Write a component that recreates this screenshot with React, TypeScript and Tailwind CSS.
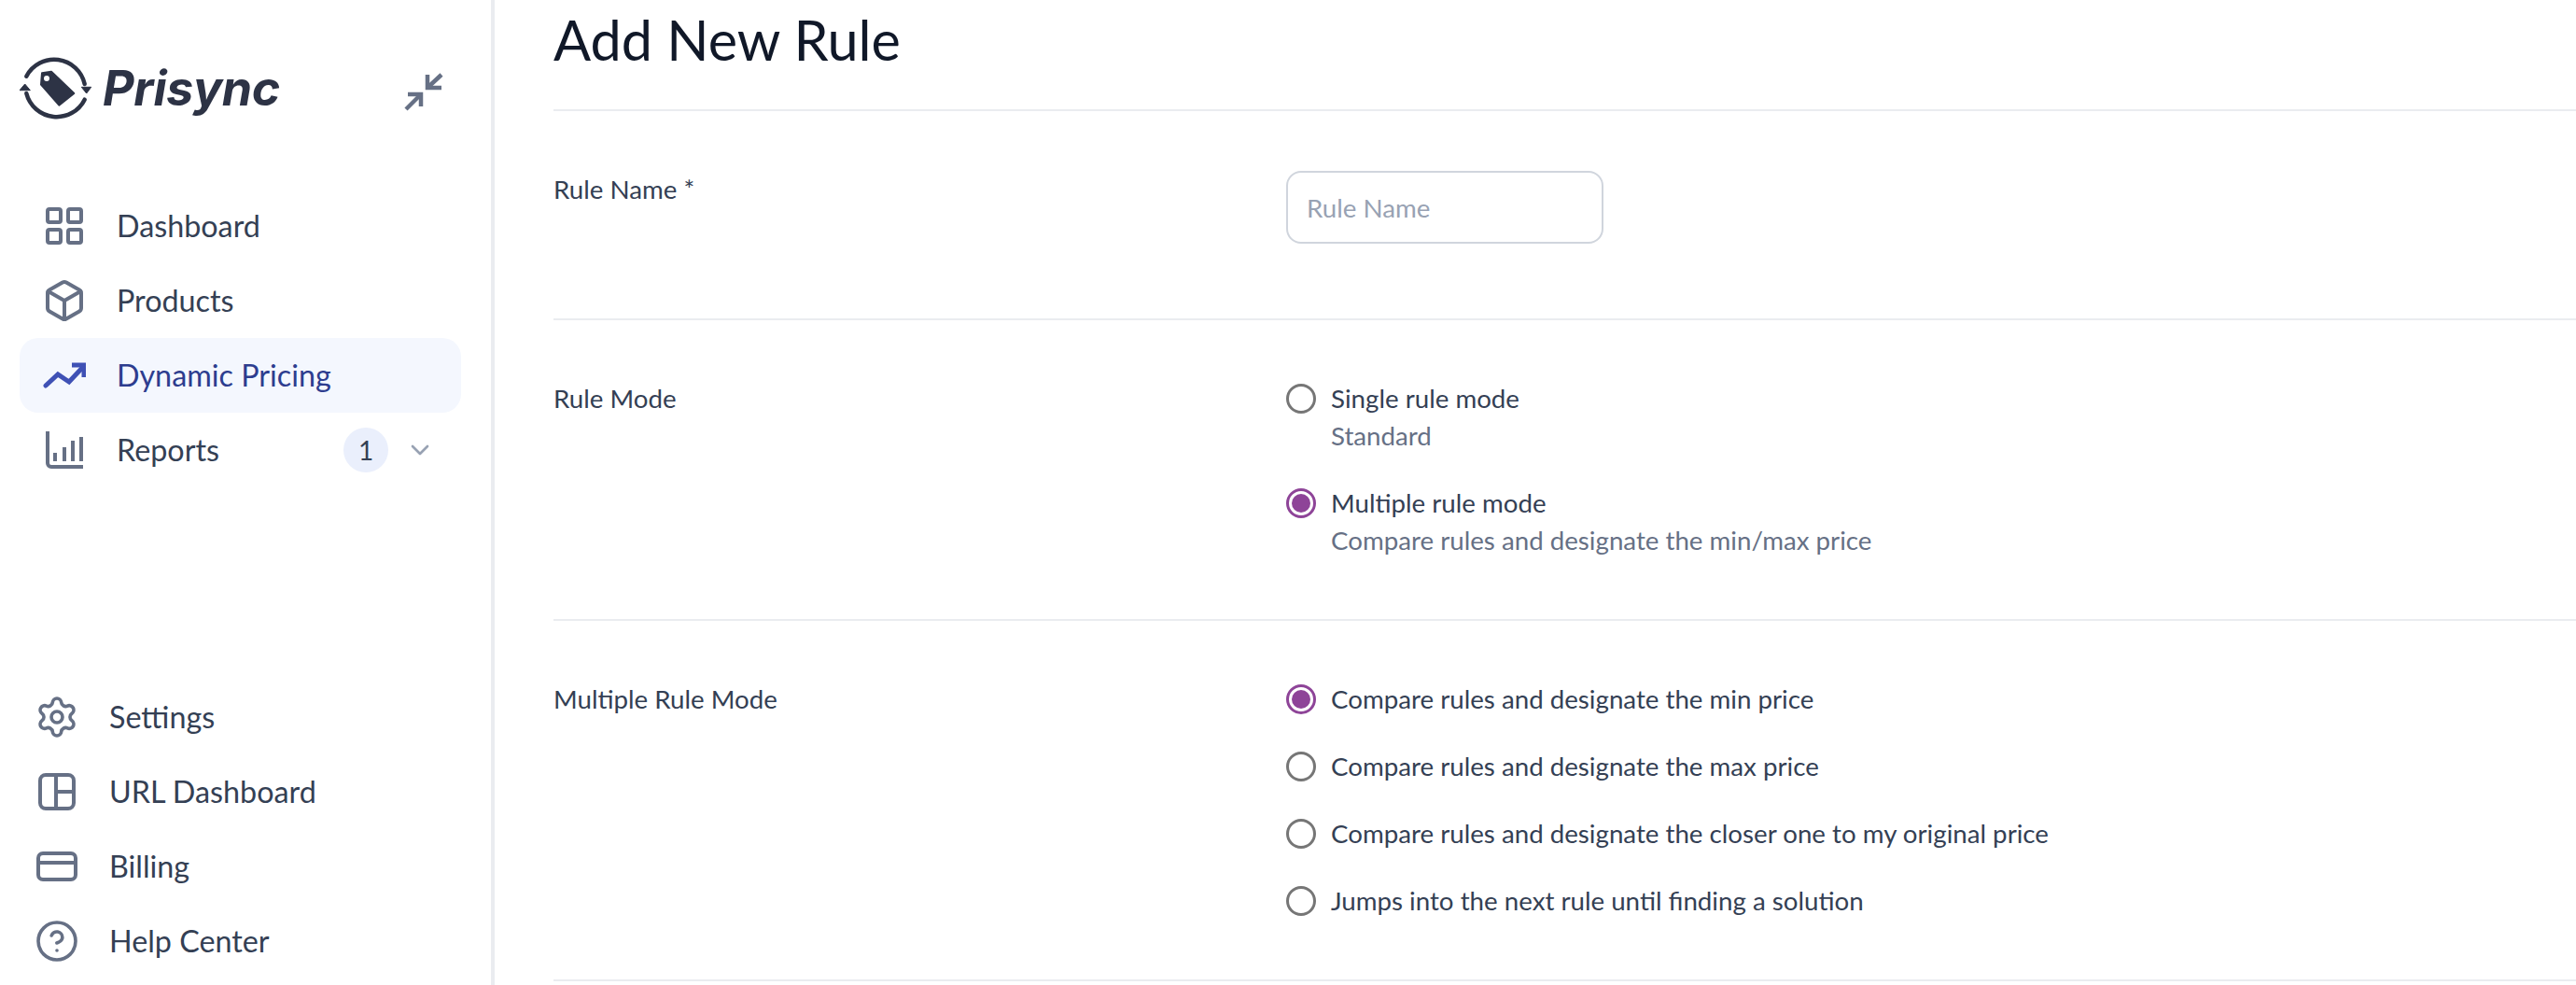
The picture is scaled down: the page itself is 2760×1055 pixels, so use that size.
import { Box, ChevronDown, CircleHelp, Settings } from 'lucide-react';
import type { ReactNode } from 'react';

const GridIcon = () => (
  <svg width="40" height="40" viewBox="0 0 40 40" fill="none" stroke="currentColor" strokeWidth="4">
    <rect x="2" y="2" width="14" height="14" rx="2" />
    <rect x="24" y="2" width="14" height="14" rx="2" />
    <rect x="2" y="24" width="14" height="14" rx="2" />
    <rect x="24" y="24" width="14" height="14" rx="2" />
  </svg>
);

const TrendIcon = () => (
  <svg width="46" height="28" viewBox="0 0 46 28" fill="none" stroke="currentColor" strokeWidth="5" strokeLinecap="round">
    <path d="M3 25 L16 13 L28 21 L43 5" />
    <path d="M31 3 H44 V16" strokeLinecap="butt" />
  </svg>
);

const ChartIcon = () => (
  <svg width="40" height="40" viewBox="0 0 40 40" fill="none" stroke="currentColor" strokeWidth="4">
    <path d="M2 0 V34 a4 4 0 0 0 4 4 H40" />
    <path d="M10 23 V32 M20 17 V32 M29 10 V32 M38 6 V32" />
  </svg>
);

const LayoutIcon = () => (
  <svg width="40" height="40" viewBox="0 0 40 40" fill="none" stroke="currentColor" strokeWidth="4">
    <rect x="2" y="2" width="36" height="36" rx="6" />
    <path d="M19 2 V38 M19 20 H38" />
  </svg>
);

const CardIcon = () => (
  <svg width="44" height="32" viewBox="0 0 44 32" fill="none" stroke="currentColor" strokeWidth="4">
    <rect x="2" y="2" width="40" height="28" rx="5" />
    <path d="M2 12 H42" />
  </svg>
);

const CollapseIcon = () => (
  <svg width="42" height="42" viewBox="0 0 42 42" fill="none" stroke="#667085" strokeWidth="4.5">
    <path d="M25 3 V17 H40" />
    <path d="M25 17 L40 3" />
    <path d="M4 24 H18 V37" />
    <path d="M18 24 L2 40" />
  </svg>
);

const LogoMark = () => (
  <svg width="78" height="72" viewBox="0 0 78 72" fill="none" className="shrink-0">
    <path d="M7.3 22.7 A33.5 33.5 0 0 1 69.7 31" stroke="#2d3345" strokeWidth="4.5" strokeLinecap="round" />
    <path d="M69.7 47.7 A33.5 33.5 0 0 1 7.3 41" stroke="#2d3345" strokeWidth="4.5" strokeLinecap="round" />
    <path d="M5.7 31 L11.3 37.7 L0 37.7 Z" fill="#2d3345" stroke="#2d3345" strokeWidth="1" strokeLinejoin="round" />
    <path d="M71.7 41 L66.3 34.3 L76.7 34.3 Z" fill="#2d3345" stroke="#2d3345" strokeWidth="1" strokeLinejoin="round" />
    <path
      d="M24 19.3 L34 17.7 L58.3 41 L42.3 53.7 L23 31.7 Z"
      fill="#2d3345"
      stroke="#2d3345"
      strokeWidth="2"
      strokeLinejoin="round"
    />
    <circle cx="29" cy="25" r="3" fill="#ffffff" />
  </svg>
);

type NavItem = { label: string; icon: ReactNode; active?: boolean; badge?: string };

const topNav: NavItem[] = [
  { label: 'Dashboard', icon: <GridIcon /> },
  { label: 'Products', icon: <Box size={48} strokeWidth={2} /> },
  { label: 'Dynamic Pricing', icon: <TrendIcon />, active: true },
  { label: 'Reports', icon: <ChartIcon />, badge: '1' },
];

const bottomNav: NavItem[] = [
  { label: 'Settings', icon: <Settings size={50} strokeWidth={1.8} /> },
  { label: 'URL Dashboard', icon: <LayoutIcon /> },
  { label: 'Billing', icon: <CardIcon /> },
  { label: 'Help Center', icon: <CircleHelp size={48} strokeWidth={1.8} /> },
];

const Radio = ({ checked }: { checked?: boolean }) =>
  checked ? (
    <span className="flex h-8 w-8 shrink-0 items-center justify-center rounded-full border-[3px] border-[#8e4498] bg-white">
      <span className="h-5 w-5 rounded-full bg-[#8e4498]" />
    </span>
  ) : (
    <span className="h-8 w-8 shrink-0 rounded-full border-[3px] border-[#767676] bg-white" />
  );

const RadioRow = ({ label, hint, checked }: { label: string; hint?: string; checked?: boolean }) => (
  <div className="flex items-start gap-4">
    <div className="flex h-10 items-center">
      <Radio checked={checked} />
    </div>
    <div>
      <p className="text-[27.7px] leading-10 text-[#344054]">{label}</p>
      {hint && <p className="text-[27.7px] leading-10 text-[#667085]">{hint}</p>}
    </div>
  </div>
);

const Section = ({ label, children }: { label: string; children: ReactNode }) => (
  <section className="grid grid-cols-[785px_1fr] border-b-2 border-[#eaecf0] pt-16 pb-16">
    <p className="text-[27.7px] leading-10 text-[#344054]">{label}</p>
    <div className="flex flex-col gap-8">{children}</div>
  </section>
);

export default function App() {
  return (
    <div className="flex h-[1055px] w-[2760px] overflow-hidden bg-white font-['Lato',sans-serif]">
      <aside className="flex w-[530px] shrink-0 flex-col border-r-4 border-[#eaecf0] pl-[21px] pr-[32px]">
        <div className="flex h-[202px] shrink-0 items-center justify-between pb-[12px] pr-[19px]">
          <div className="flex items-center gap-[11px]">
            <LogoMark />
            <span className="font-['Inter',sans-serif] text-[52px] font-bold italic leading-none tracking-[-0.4px] text-[#2d3345]">
              Prisync
            </span>
          </div>
          <div className="pt-[6px]">
            <CollapseIcon />
          </div>
        </div>
        <nav className="flex flex-col">
          {topNav.map((item) => (
            <a
              key={item.label}
              className={`flex h-20 items-center rounded-[20px] pl-6 pr-[28px] text-[32.3px] ${
                item.active ? 'bg-[#f4f7fe] text-[#2d3d8f]' : 'text-[#344054]'
              }`}
            >
              <span className={`flex w-12 justify-center ${item.active ? 'text-[#3f51b5]' : 'text-[#667085]'}`}>
                {item.icon}
              </span>
              <span className="ml-[32px] flex-1">{item.label}</span>
              {item.badge && (
                <span className="flex h-12 w-12 items-center justify-center rounded-full bg-[#eaeffc] text-[28px] text-[#344054]">
                  {item.badge}
                </span>
              )}
              {item.badge && <ChevronDown size={32} className="ml-[18px] text-[#98a2b3]" />}
            </a>
          ))}
        </nav>
        <nav className="mt-auto flex flex-col pb-[7px]">
          {bottomNav.map((item) => (
            <a key={item.label} className="flex h-20 items-center pl-4 text-[32.3px] text-[#344054]">
              <span className="flex w-12 justify-center text-[#667085]">{item.icon}</span>
              <span className="ml-[32px]">{item.label}</span>
            </a>
          ))}
        </nav>
      </aside>
      <main className="min-w-0 flex-1 pl-[63px]">
        <div className="h-[119px] border-b-2 border-[#eaecf0]">
          <h1 className="text-[59.4px] leading-[84px] text-[#101828]">Add New Rule</h1>
        </div>
        <section className="grid grid-cols-[785px_1fr] border-b-2 border-[#eaecf0] pt-16 pb-20">
          <label className="text-[27.7px] leading-10 text-[#344054]">Rule Name *</label>
          <input
            placeholder="Rule Name"
            className="h-[78px] w-[340px] rounded-2xl border-2 border-[#d0d5dd] bg-white px-[20px] text-[27.7px] text-[#344054] outline-none placeholder:text-[#98a2b3]"
          />
        </section>
        <Section label="Rule Mode">
          <RadioRow label="Single rule mode" hint="Standard" />
          <RadioRow label="Multiple rule mode" hint="Compare rules and designate the min/max price" checked />
        </Section>
        <Section label="Multiple Rule Mode">
          <RadioRow label="Compare rules and designate the min price" checked />
          <RadioRow label="Compare rules and designate the max price" />
          <RadioRow label="Compare rules and designate the closer one to my original price" />
          <RadioRow label="Jumps into the next rule until finding a solution" />
        </Section>
      </main>
    </div>
  );
}
